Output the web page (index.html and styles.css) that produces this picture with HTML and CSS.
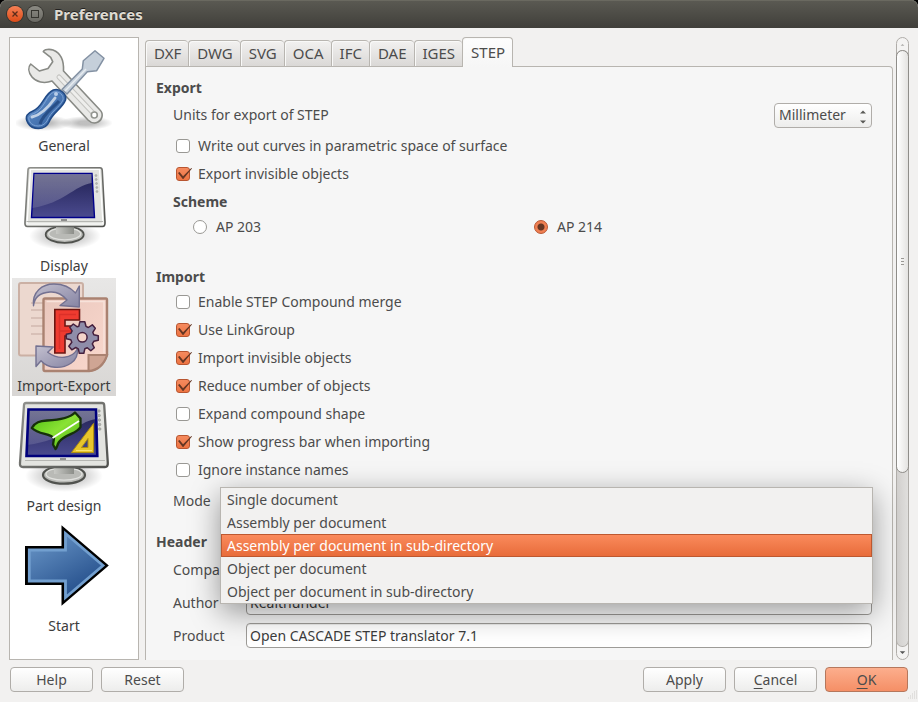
FILE: index.html
```html
<!DOCTYPE html>
<html lang="en">
<head>
<meta charset="utf-8">
<title>Preferences</title>
<link rel="stylesheet" href="styles.css">
</head>
<body>
<div class="dialog">
  <header class="titlebar">
    <button class="win-btn win-close" type="button" aria-label="Close">
      <svg viewBox="0 0 16 16"><path d="M5.500 5.500l5 5M10.500 5.500l-5 5" stroke="#5a2c1a" stroke-width="1.300"/></svg>
    </button>
    <button class="win-btn" type="button" aria-label="Maximize">
      <svg viewBox="0 0 16 16"><rect x="4.500" y="4.500" width="7" height="7" fill="none" stroke="#35342f"/></svg>
    </button>
    <h1 class="title">Preferences</h1>
  </header>

  <main class="content">
    <nav class="categories" aria-label="Categories">
      <button class="category" type="button">
        <svg class="category-icon" viewBox="0 0 96 96">
          <defs>
            <radialGradient id="shade"><stop offset="0.300" stop-color="#000" stop-opacity=".25"/><stop offset="1" stop-color="#000" stop-opacity="0"/></radialGradient>
            <linearGradient id="handle" x1="0" y1="0" x2="1" y2="1"><stop offset="0" stop-color="#6d97cd"/><stop offset=".5" stop-color="#4a78b5"/><stop offset="1" stop-color="#2c5896"/></linearGradient>
          </defs>
          <ellipse cx="27" cy="83" rx="29" ry="8" fill="url(#shade)"/>
          <ellipse cx="70" cy="83" rx="27" ry="7" fill="url(#shade)"/>
          <path d="M27.300 11.700C28 9 34 9 37 10C45 13 48 20 47.500 31L84 70C88 74 86 80 82 82C78 84 74 82 72 80L36 41C28 44 20 42 16 37C12 32 12 27 14.700 24L23.300 31L32 28.500L36.700 21.700L34.700 17.300Z" fill="#e9e9e7" stroke="#888a85" stroke-width="1.600" stroke-linejoin="round"/>
          <path d="M43 37l35 37" stroke="#c4c4c1" stroke-width="5" stroke-linecap="round"/>
          <path d="M43 37l35 37" stroke="#eeeeec" stroke-width="3" stroke-linecap="round"/>
          <circle cx="78.300" cy="75" r="3" fill="#fff" stroke="#92948f" stroke-width="1.600"/>
          <path d="M79 10.700L88 18.300L80.700 30.700L71.300 31.700L51 54L46 49.500L66.300 29L67.300 20.700Z" fill="#c5cfda" stroke="#8391a3" stroke-width="1.500" stroke-linejoin="round"/>
          <path d="M70 29L49 51" stroke="#e6ebf0" stroke-width="1.500"/>
          <path d="M37.300 50C44 48 51 54 49.500 60C46 69 37 72 33 82C29 91 16 90 12 83C8 76 12 73 17 71C27 67 28 54 37.300 50Z" fill="url(#handle)" stroke="#204a87" stroke-width="1.600"/>
          <path d="M38 52C43 51 48 55 47 60C43 68 35 71 31 81C27 88 17 87 14 82C11 77 14 75 19 73C29 68 30 55 38 52Z" fill="none" stroke="#7ca3d6"/>
          <path d="M16 77C26 75 34 65 39 58" stroke="#fff" stroke-opacity=".65" stroke-width="3" fill="none" stroke-linecap="round"/>
          <path d="M24 84C27 74 36 69 43 61" stroke="#284f88" stroke-width="3" fill="none"/>
          <circle cx="40" cy="54" r="2" fill="#b7cde9"/>
        </svg>
        <span>General</span>
      </button>

      <button class="category" type="button">
        <svg class="category-icon" viewBox="0 0 96 96">
          <defs>
            <linearGradient id="screen" x1="0" y1="0" x2="0" y2="1"><stop offset="0" stop-color="#202052"/><stop offset="1" stop-color="#4b4b8f"/></linearGradient>
            <linearGradient id="gloss" x1="0" y1="0" x2="0" y2="1"><stop offset="0" stop-color="#fff" stop-opacity=".38"/><stop offset="1" stop-color="#fff" stop-opacity=".12"/></linearGradient>
            <linearGradient id="neck" x1="0" y1="0" x2="1" y2="0"><stop offset="0" stop-color="#c8c9c5"/><stop offset="1" stop-color="#8c8e89"/></linearGradient>
            <linearGradient id="bezel" x1="0" y1="0" x2="1" y2="1"><stop offset="0" stop-color="#90918d"/><stop offset="1" stop-color="#50514e"/></linearGradient>
          </defs>
          <ellipse cx="49" cy="76" rx="36" ry="14" fill="url(#shade)"/>
          <ellipse cx="48.700" cy="74.500" rx="19" ry="8.300" fill="#b9bab6" stroke="#50524e" stroke-width="1.800"/>
          <ellipse cx="48.700" cy="73.800" rx="16" ry="6" fill="none" stroke="#e0e1de" stroke-width="1.300"/>
          <path d="M40 66h18v8H40z" fill="url(#neck)"/>
          <path d="M14 7.700H84Q86 7.700 86.200 10L89 62Q89.300 66.500 86.500 66.500H11.500Q8.500 66.500 9 62L12 10Q12 7.700 14 7.700Z" fill="#e3e4e0" stroke="url(#bezel)" stroke-width="1.600"/>
          <path d="M14.500 9.500H83.500L87 64H11Z" fill="none" stroke="#fff" stroke-width="1.200"/>
          <path d="M18 13.500H76L78.500 57.500H15.500Z" fill="url(#screen)" stroke="#00008b" stroke-width="1.400"/>
          <path d="M18.500 14H75.500V23C58 26 48 43 16.500 48Z" fill="url(#gloss)"/>
          <path d="M10.500 61.500H87" stroke="#b5b6b2"/>
          <path d="M45 60h6" stroke="#777" stroke-width="1.600"/>
          <g fill="#b4b5b1" stroke="#a5a7a2" stroke-width=".6"><circle cx="80" cy="15.500" r="1"/><circle cx="80.200" cy="19.500" r="1"/><circle cx="80.500" cy="23.500" r="1"/><circle cx="80.800" cy="27.500" r="1"/><circle cx="81" cy="31.500" r="1"/></g>
        </svg>
        <span>Display</span>
      </button>

      <button class="category selected" type="button" aria-current="page">
        <svg class="category-icon" viewBox="0 0 96 96">
          <defs>
            <linearGradient id="swoop" x1="0" y1="0" x2="1" y2="1"><stop offset="0" stop-color="#c3c0cf"/><stop offset="1" stop-color="#8684a3"/></linearGradient>
            <linearGradient id="paper" x1="0" y1="0" x2="1" y2="1"><stop offset="0" stop-color="#e9c7bd"/><stop offset="1" stop-color="#fad8cd"/></linearGradient>
          </defs>
          <rect x="3" y="3" width="64" height="72.500" rx="2" fill="#ecd8cf" stroke="#cbb0a4" stroke-width="2"/>
          <path d="M15 23h16M15 30h16M15 38h16M15 46h16M15 54h16" stroke="#d8c0b7" stroke-width="2"/>
          <path d="M29 18.500H90Q91 18.500 91 20V75C88 84 82 90 73 91H29Q27.500 91 27.500 89V20Q27.500 18.500 29 18.500Z" fill="url(#paper)" stroke="#aa8271" stroke-width="2.400"/>
          <path d="M30.500 21.500H88V73" fill="none" stroke="#f7e2da" stroke-width="1.500"/>
          <path d="M91 75H72.500V91C82 90 88 84 91 75Z" fill="#cfa594" stroke="#aa8271" stroke-width="2"/>
          <path d="M17.500 25.700C16 12 26 4 38 4C48 4 55 8 59.500 13L63.300 6V27L44 25.500L51 20C46 14 40 11.500 34 12C26 12.500 18.500 16 17.500 25.700Z" fill="url(#swoop)" stroke="#737191" stroke-width="1.400" stroke-linejoin="round"/>
          <path d="M20 66L37.300 67L31.700 72.300C42 80 56 79 61.300 69C63 82 50 88 39 87.300C32 87 28 84 25 80.700L20 86.500Z" fill="url(#swoop)" stroke="#737191" stroke-width="1.400" stroke-linejoin="round"/>
          <path d="M38.800 29.500H63.500V40H49V46H58V56H49V73H38.800Z" fill="#ef3b30" stroke="#6b1712" stroke-width="1.600"/>
          <path d="M43.500 69V34.500H60M44 51h11" fill="none" stroke="#dc3029" stroke-width="1.500"/>
          <g transform="translate(66.300 57.300)" stroke="#45203e" stroke-width="1.500" stroke-linejoin="round">
            <path d="M-2.500 -15.500H2.500L3.700 -11L6 -9.800L10 -12.500L13 -9L10.500 -5L11.500 -2.500L16 -1.500V3L11.500 4L10 6.500L12 10.500L8.500 13.500L5 10.500L2.500 11.500L1.500 16H-3L-4 11.500L-6.500 10.200L-10.500 12.500L-13.500 9L-10.500 5L-11.500 2.500L-16 1.500V-3L-11.500 -4L-10.200 -6.500L-12.500 -10L-9 -13.300L-5 -10.500L-3.500 -11Z" fill="#8f8da9"/>
            <circle r="4.800" fill="#f5d5ca"/>
          </g>
        </svg>
        <span>Import-Export</span>
      </button>

      <button class="category" type="button">
        <svg class="category-icon" viewBox="0 0 96 96">
          <defs>
            <linearGradient id="leaf" x1="0" y1="0" x2="1" y2="1"><stop offset="0" stop-color="#4bbd10"/><stop offset=".5" stop-color="#8ae234"/><stop offset="1" stop-color="#3fa80c"/></linearGradient>
          </defs>
          <ellipse cx="48" cy="76" rx="39" ry="16" fill="url(#shade)"/>
          <ellipse cx="48" cy="75" rx="21" ry="8.700" fill="#b9bab6" stroke="#50524e" stroke-width="2.200"/>
          <ellipse cx="48" cy="74" rx="18" ry="6.200" fill="none" stroke="#e0e1de" stroke-width="1.300"/>
          <path d="M38 66h20v8H38z" fill="url(#neck)"/>
          <path d="M10 3H86Q88 3 88.200 5L91.800 63Q92 67 89 67H7Q3.500 67 4 63L8 5Q8 3 10 3Z" fill="#e3e4e0" stroke="url(#bezel)" stroke-width="2.300"/>
          <path d="M12.500 9.500H80L81.300 56H10.500Z" fill="url(#screen)"/>
          <path d="M12.500 10H80V19C61 22 50 40 11 45Z" fill="url(#gloss)"/>
          <path d="M12.500 9.500H80L81.300 56H10.500Z" fill="none" stroke="#00007c" stroke-width="2.600"/>
          <path d="M9 60.500H89" stroke="#b5b6b2"/><path d="M44 59h6" stroke="#777" stroke-width="1.500"/>
          <g fill="#b4b5b1" stroke="#989a95" stroke-width=".8"><circle cx="83" cy="11" r="1.200"/><circle cx="83.200" cy="15.500" r="1.200"/><circle cx="83.400" cy="20" r="1.200"/><circle cx="83.600" cy="24.500" r="1.200"/><circle cx="83.800" cy="29" r="1.200"/></g>
          <path d="M15.800 28C19 22 24 21 31 20.500C41 20 53 19 59 12.500L64.500 18.500V27C61 34 49 34 43 42C41 45 41 48 39.500 49L37 44.500L38 38.500C35 33 23 35 15.800 28Z" fill="url(#leaf)" stroke="#16300a" stroke-width="2.300" stroke-linejoin="round"/>
          <path d="M36.500 38L63 21" stroke="#fff" stroke-width="1.800"/>
          <path d="M55.500 52.500L77.500 23.500V52.500ZM65.500 47.500H72V38.500Z" fill="#e8c52c" fill-rule="evenodd" stroke="#b1900f"/>
          <path d="M60 50.500H76" stroke="#f8e273"/>
        </svg>
        <span>Part design</span>
      </button>

      <button class="category" type="button">
        <svg class="category-icon" viewBox="0 0 96 96">
          <defs><linearGradient id="arrow" x1="0" y1="0" x2=".6" y2="1"><stop offset="0" stop-color="#729fcf"/><stop offset="1" stop-color="#204a87"/></linearGradient></defs>
          <path d="M10.500 27.500H47V8.500L90.500 45.500L47 82.500V63.500H10.500Z" fill="url(#arrow)" stroke="#000" stroke-width="3"/>
          <path d="M13.300 30H49.500V13.500L87 45.500L49.500 77.500V61H13.300Z" fill="none" stroke="#729fcf" stroke-width="2.800"/>
        </svg>
        <span>Start</span>
      </button>
    </nav>

    <section class="pages">
      <div class="tabs" role="tablist">
        <button class="tab" type="button" role="tab">DXF</button>
        <button class="tab" type="button" role="tab">DWG</button>
        <button class="tab" type="button" role="tab">SVG</button>
        <button class="tab" type="button" role="tab">OCA</button>
        <button class="tab" type="button" role="tab">IFC</button>
        <button class="tab" type="button" role="tab">DAE</button>
        <button class="tab" type="button" role="tab">IGES</button>
        <button class="tab active" type="button" role="tab" aria-selected="true">STEP</button>
      </div>

      <form class="panel">
        <h2 class="heading">Export</h2>
        <div class="group">
          <div class="units">
            <label for="units">Units for export of STEP</label>
            <span class="select-wrap">
              <select class="select" id="units"><option>Millimeter</option></select>
              <svg class="spin" viewBox="0 0 6 14" aria-hidden="true"><path d="M0 3.500L3 .5L6 3.500ZM0 10.500H6L3 13.500Z" fill="#5a5a57"/></svg>
            </span>
          </div>
          <label class="check"><input type="checkbox">Write out curves in parametric space of surface</label>
          <label class="check"><input type="checkbox" checked>Export invisible objects</label>
          <h3 class="heading subheading">Scheme</h3>
          <div class="radios">
            <label class="radio"><input type="radio" name="scheme">AP 203</label>
            <label class="radio"><input type="radio" name="scheme" checked>AP 214</label>
          </div>
        </div>

        <h2 class="heading import-heading">Import</h2>
        <div class="group">
          <label class="check"><input type="checkbox">Enable STEP Compound merge</label>
          <label class="check"><input type="checkbox" checked>Use LinkGroup</label>
          <label class="check"><input type="checkbox" checked>Import invisible objects</label>
          <label class="check"><input type="checkbox" checked>Reduce number of objects</label>
          <label class="check"><input type="checkbox">Expand compound shape</label>
          <label class="check"><input type="checkbox" checked>Show progress bar when importing</label>
          <label class="check"><input type="checkbox">Ignore instance names</label>
          <div class="mode">
            <span id="mode-label">Mode</span>
            <div class="mode-field">
              <ul class="popup" role="listbox" aria-labelledby="mode-label">
                <li class="option" role="option">Single document</li>
                <li class="option" role="option">Assembly per document</li>
                <li class="option current" role="option" aria-selected="true">Assembly per document in sub-directory</li>
                <li class="option" role="option">Object per document</li>
                <li class="option" role="option">Object per document in sub-directory</li>
              </ul>
            </div>
          </div>
        </div>

        <h2 class="heading header-heading">Header</h2>
        <div class="group fields">
          <label for="company">Company</label><input class="text" id="company" type="text">
          <label for="author">Author</label><input class="text" id="author" type="text" value="Realthunder">
          <label for="product">Product</label><input class="text" id="product" type="text" value="Open CASCADE STEP translator 7.1">
        </div>
      </form>
    </section>

    <div class="scrollbar" aria-hidden="true">
      <svg class="scroll-arrow" viewBox="0 0 12 12"><path d="M4 8L6 6L8 8Z" fill="#aaa9a6"/></svg>
      <div class="track"><div class="thumb"><i></i><i></i><i></i></div></div>
      <svg class="scroll-arrow" viewBox="0 0 12 12"><path d="M3 4H9L6 7Z" fill="#555"/></svg>
    </div>
  </main>

  <footer class="actions">
    <button class="button" type="button">Help</button>
    <button class="button" type="button">Reset</button>
    <span class="gap"></span>
    <button class="button" type="button">Apply</button>
    <button class="button" type="button"><u>C</u>ancel</button>
    <button class="button primary" type="submit"><u>O</u>K</button>
    <svg class="grip" viewBox="0 0 10 10" aria-hidden="true"><path d="M8 0h1M6 2h1M8 2h1M4 4h1M6 4h1M8 4h1M2 6h1M4 6h1M6 6h1M8 6h1M0 8h1M2 8h1M4 8h1M6 8h1M8 8h1" stroke="#cfcdca"/></svg>
  </footer>
</div>
</body>
</html>
```
FILE: styles.css
```css
* {
  box-sizing: border-box;
}

body {
  margin: 0;
  background: #000;
  color: #4c4c4c;
  font: 14px/20px "Noto Sans", "Open Sans", sans-serif;
}

button,
input,
select {
  font: inherit;
  color: inherit;
}

button {
  padding: 0;
  border: 0;
  background: none;
}

.dialog {
  display: flex;
  flex-direction: column;
  min-height: 100vh;
  background: #f2f1f0;
  border-radius: 7px 7px 0 0;
}

/* Title bar */
.titlebar {
  display: flex;
  align-items: center;
  gap: 4px;
  height: 28px;
  padding: 0 7px;
  border-radius: 7px 7px 0 0;
  background: linear-gradient(#5b5a53, #403f3a);
  box-shadow: inset 0 1px #6a6960;
}

.win-btn {
  width: 16px;
  height: 16px;
  border-radius: 50%;
  background: linear-gradient(#8b8a83, #6b6a64);
  box-shadow: 0 0 0 1px #363530;
}

.win-btn svg {
  display: block;
}

.win-close {
  background: linear-gradient(#f58055, #dd4c18);
}

.title {
  margin: 0 0 0 7px;
  color: #dfdbd2;
  font-size: 15px;
  line-height: 20px;
  text-shadow: 0 -1px #222;
}

/* Main area */
.content {
  display: flex;
  flex: 1;
  padding: 9px 9px 0;
}

.categories {
  display: flex;
  flex-direction: column;
  gap: 2px;
  width: 130px;
  margin-right: 6px;
  padding: 0 2px;
  background: #fff;
  border: 1px solid #b8b5b0;
}

.category {
  display: flex;
  flex-direction: column;
  align-items: center;
  width: 104px;
  height: 118px;
  padding-top: 2px;
  color: #3c3c3c;
}

.category.selected {
  background: linear-gradient(#e8e7e6, #d8d6d4);
}

.category-icon {
  width: 96px;
  height: 96px;
}

/* Tabs and page */
.pages {
  display: flex;
  flex: 1;
  flex-direction: column;
  min-width: 0;
}

.tabs {
  display: flex;
  align-items: flex-end;
  height: 30px;
  margin-bottom: -1px;
  z-index: 1;
}

.tab {
  height: 27px;
  padding: 0 7px 2px 8px;
  border: 1px solid #b8b5b0;
  border-right-width: 0;
  border-radius: 4px 4px 0 0;
  background: linear-gradient(#f2f1f0, #dad8d6);
  box-shadow: inset 1px 1px #f9f9f8;
  font-size: 15px;
}

.tab.active {
  height: 30px;
  border-width: 1px 1px 0;
  background: linear-gradient(#fdfdfd, #f6f6f6);
}

.panel {
  flex: 1;
  padding: 11px 20px 12px 10px;
  background: #f6f6f6;
  border: 1px solid #b8b5b0;
  border-bottom: 0;
  border-radius: 0 4px 0 0;
}

.heading {
  margin: 0;
  font-size: 14px;
  line-height: 20px;
}

.subheading {
  margin-top: 4px;
}

.import-heading {
  margin: 25px 0 1px;
}

.header-heading {
  margin-top: 14px;
}

.group {
  padding-left: 17px;
}

.units {
  display: flex;
  align-items: center;
  justify-content: space-between;
  height: 34px;
}

.select-wrap {
  position: relative;
}

.select {
  display: block;
  width: 98px;
  height: 25px;
  padding: 0 4px;
  appearance: none;
  border: 1px solid #b0ada9;
  border-radius: 4px;
  background: linear-gradient(#fff, #ededec);
}

.spin {
  position: absolute;
  right: 6px;
  top: 7px;
  width: 6px;
  height: 14px;
}

.check,
.radio {
  display: flex;
  align-items: center;
  gap: 8px;
  height: 28px;
  padding-left: 3px;
}

.radio {
  gap: 9px;
}

.check input,
.radio input {
  flex: none;
  width: 14px;
  height: 14px;
  margin: 0;
  appearance: none;
  background: #fff;
  border: 1px solid #999894;
  border-radius: 3px;
}

.radio input {
  border-radius: 50%;
}

.check input:checked {
  position: relative;
  background: linear-gradient(#f58a5e, #ed7442);
  border-color: #b85530;
}

.check input:checked::after {
  content: "";
  position: absolute;
  left: 1px;
  top: 0;
  width: 14px;
  height: 11px;
  background: #653623;
  clip-path: polygon(0 45%, 11% 36%, 36% 76%, 95% 0, 100% 4%, 38% 100%, 34% 100%);
}

.radio input:checked {
  background: radial-gradient(circle, #653623 0 3px, #f07f52 4px);
  border-color: #b85530;
}

.radios {
  display: grid;
  grid-template-columns: 1fr 1fr;
  margin-left: 17px;
  height: 30px;
  align-items: center;
}

.mode {
  display: grid;
  grid-template-columns: 47px 1fr;
  align-items: center;
  height: 34px;
}

.mode-field {
  position: relative;
  height: 25px;
}

.popup {
  position: absolute;
  top: -2px;
  left: 0;
  right: -1px;
  margin: 0;
  padding: 0;
  list-style: none;
  background: #f2f1f0;
  border: 1px solid #b8b5b0;
  box-shadow: 0 8px 28px rgba(0, 0, 0, 0.4);
}

.option {
  height: 23px;
  padding: 0 5px;
  border: 1px solid transparent;
  line-height: 21px;
}

.option.current {
  color: #fff;
  background: linear-gradient(#fa8a5c, #e86c3a);
  border-color: #bd5830;
}

.fields {
  display: grid;
  grid-template-columns: 65px 1fr;
  gap: 8px;
  align-items: center;
  padding-top: 5px;
}

.text {
  min-width: 0;
  height: 25px;
  padding: 0 3px;
  color: #3c3c3c;
  background: #fff;
  border: 1px solid #9d9b97;
  border-radius: 4px;
  box-shadow: inset 0 1px #ececeb;
}

/* Scroll bar */
.scrollbar {
  display: flex;
  flex-direction: column;
  width: 13px;
  margin-left: 3px;
  border: 1px solid #b0ada9;
  border-radius: 7px;
  background: #f4f3f2;
}

.scroll-arrow {
  flex: none;
  height: 12px;
}

.track {
  flex: 1;
  margin: 0 -1px;
  border: 1px solid #b0ada9;
  border-top: 0;
  border-radius: 7px;
  background: linear-gradient(90deg, #d2d0ce, #e0dfdd);
}

.thumb {
  display: flex;
  flex-direction: column;
  align-items: center;
  justify-content: center;
  gap: 2px;
  height: 71%;
  margin: 0 -1px;
  border: 1px solid #8f8d89;
  border-radius: 7px;
  background: linear-gradient(90deg, #fff, #e4e3e1);
}

.thumb i {
  width: 3px;
  height: 1px;
  background: #9a9894;
}

/* Footer */
.actions {
  position: relative;
  display: flex;
  gap: 8px;
  padding: 7px 10px 10px;
}

.gap {
  flex: 1;
}

.button {
  width: 83px;
  height: 25px;
  border: 1px solid #b0ada9;
  border-radius: 4px;
  background: linear-gradient(#fff, #ededec);
}

.button u {
  text-underline-offset: 3px;
}

.button.primary {
  border-color: #b5775c;
  background: linear-gradient(#fcae8d, #f58f66);
}

.grip {
  position: absolute;
  right: 0;
  bottom: 2px;
  width: 10px;
  height: 10px;
}
```
